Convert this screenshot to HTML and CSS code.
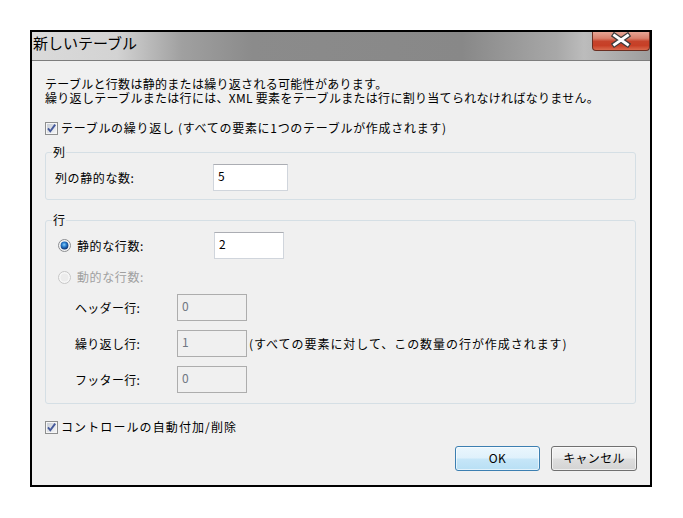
FILE: index.html
```html
<!DOCTYPE html>
<html lang="ja">
<head>
<meta charset="utf-8">
<title>新しいテーブル</title>
<link rel="stylesheet" href="styles.css">
</head>
<body>
<div class="page">
  <div class="dialog">
    <div class="titlebar">
      <span class="title">新しいテーブル</span>
      <button class="close" type="button" aria-label="閉じる">
        <svg width="56" height="18" viewBox="0 0 56 18">
          <path d="M21.5 3.5 L34.5 12.5 M34.5 3.5 L21.5 12.5" stroke="#3b3b3b" stroke-width="5.2" fill="none" stroke-linecap="square"/>
          <path d="M21.5 3.5 L34.5 12.5 M34.5 3.5 L21.5 12.5" stroke="#ffffff" stroke-width="2.8" fill="none" stroke-linecap="square"/>
        </svg>
      </button>
    </div>
    <div class="client">
      <p class="intro">テーブルと行数は静的または繰り返される可能性があります。<br>繰り返しテーブルまたは行には、XML 要素をテーブルまたは行に割り当てられなければなりません。</p>

      <label class="check top">
        <svg class="box" width="13" height="13" viewBox="0 0 13 13">
          <defs><linearGradient id="cb1" x1="0" y1="0" x2="1" y2="1"><stop offset="0" stop-color="#c9ced6"/><stop offset="1" stop-color="#f4f5f7"/></linearGradient></defs>
          <rect x="0.5" y="0.5" width="12" height="12" fill="#f6f6f6" stroke="#8e8f8f"/>
          <rect x="2" y="2" width="9" height="9" fill="url(#cb1)"/>
          <path d="M3 6.4 L5.3 9.3 L10.2 2.6" fill="none" stroke="#45599b" stroke-width="1.9"/>
        </svg>
        <span>テーブルの繰り返し (すべての要素に1つのテーブルが作成されます)</span>
      </label>

      <fieldset class="group g1">
        <legend>列</legend>
        <div class="row col-row">
          <span class="lbl col-lbl">列の静的な数:</span>
          <input class="field w75" type="text" value="5">
        </div>
      </fieldset>

      <fieldset class="group g2">
        <legend>行</legend>
        <div class="row radio-row">
          <svg class="radio" width="13" height="13" viewBox="0 0 13 13">
            <defs><radialGradient id="rd1" cx="0.45" cy="0.4" r="0.6"><stop offset="0" stop-color="#8fd0f8"/><stop offset="0.45" stop-color="#2a7fd0"/><stop offset="1" stop-color="#0c2f6e"/></radialGradient></defs>
            <circle cx="6.5" cy="6.5" r="6" fill="#f5f5f5" stroke="#8b8d90"/>
            <circle cx="6.5" cy="6.5" r="3.9" fill="url(#rd1)"/>
          </svg>
          <span class="lbl radio-lbl">静的な行数:</span>
          <input class="field w70" type="text" value="2">
        </div>
        <div class="row radio-row dyn">
          <svg class="radio" width="13" height="13" viewBox="0 0 13 13">
            <circle cx="6.5" cy="6.5" r="6" fill="#f7f7f7" stroke="#c6c6c6"/>
            <circle cx="6.5" cy="6.5" r="4" fill="#ececec"/>
          </svg>
          <span class="lbl disabled">動的な行数:</span>
        </div>
        <div class="row sub first">
          <span class="lbl sub-lbl">ヘッダー行:</span>
          <input class="field w70" type="text" value="0" disabled>
        </div>
        <div class="row sub">
          <span class="lbl sub-lbl">繰り返し行:</span>
          <input class="field w70" type="text" value="1" disabled>
          <span class="note">(すべての要素に対して、この数量の行が作成されます)</span>
        </div>
        <div class="row sub">
          <span class="lbl sub-lbl">フッター行:</span>
          <input class="field w70" type="text" value="0" disabled>
        </div>
      </fieldset>

      <label class="check bottom">
        <svg class="box" width="13" height="13" viewBox="0 0 13 13">
          <defs><linearGradient id="cb2" x1="0" y1="0" x2="1" y2="1"><stop offset="0" stop-color="#c9ced6"/><stop offset="1" stop-color="#f4f5f7"/></linearGradient></defs>
          <rect x="0.5" y="0.5" width="12" height="12" fill="#f6f6f6" stroke="#8e8f8f"/>
          <rect x="2" y="2" width="9" height="9" fill="url(#cb2)"/>
          <path d="M3 6.4 L5.3 9.3 L10.2 2.6" fill="none" stroke="#45599b" stroke-width="1.9"/>
        </svg>
        <span>コントロールの自動付加/削除</span>
      </label>

      <div class="buttons">
        <button class="btn ok" type="button">OK</button>
        <button class="btn cancel" type="button">キャンセル</button>
      </div>
    </div>
  </div>
</div>
</body>
</html>
```

FILE: styles.css
```css
* { box-sizing: border-box; }

body {
  margin: 0;
  background: #ffffff;
  font-family: "Noto Sans CJK JP", "Noto Sans", sans-serif;
  font-size: 12px;
  color: #000;
}

.page {
  padding: 30px 0 0 30px;
}

.dialog {
  width: 622px;
  height: 457px;
  border: 2px solid #000;
  background: #f0f0f0;
  display: flex;
  flex-direction: column;
}

.titlebar {
  flex: none;
  height: 29px;
  display: flex;
  align-items: flex-start;
  border-bottom: 1px solid #7d7d7d;
  background: linear-gradient(to right, #dadada 0px, #d3d3d3 85px, #a0a0a0 150px, #8b8b8b 220px, #888888 430px, #a8a8a8 525px, #bcbcbc 552px, #9d9d9d 618px);
}

.title {
  font-size: 15px;
  line-height: 18px;
  padding: 2px 0 0 1px;
}

.close {
  margin-left: auto;
  width: 58px;
  height: 19px;
  padding: 0;
  border: 1px solid #6a2d20;
  border-top: 0;
  border-radius: 0 0 4px 4px;
  background: linear-gradient(#e6a595 0%, #d9806c 35%, #c6432b 52%, #c73f26 75%, #d9694c 100%);
  display: block;
}

.close svg { display: block; }

.client {
  flex: 1;
  padding: 16px 14px 0 13px;
}

.intro {
  margin: 0;
  line-height: 14px;
  letter-spacing: 0.3px;
}

.check {
  display: flex;
  align-items: center;
  gap: 3px;
  height: 14px;
  margin-top: 16px;
  line-height: 14px;
  letter-spacing: 0.3px;
}

.check.top span { letter-spacing: 0.7px; }

.box, .radio { display: block; flex: none; }

.group {
  margin: 10px 0 0;
  padding: 5px 0 8px;
  border: 1px solid #d5dfe5;
  border-radius: 3px;
  min-inline-size: 0;
}

.group legend {
  margin-left: 6px;
  padding: 0 1px;
  line-height: 14px;
}

.g2 {
  margin-top: 13px;
  padding-bottom: 10px;
}

.row {
  display: flex;
  align-items: center;
}

.lbl {
  flex: none;
  line-height: 14px;
  letter-spacing: 0.3px;
}

.col-row { padding-left: 9px; }
.col-lbl { width: 158px; letter-spacing: 0.6px; }

.radio-row {
  padding-left: 12px;
  gap: 6px;
}
.radio-lbl { width: 131px; letter-spacing: 0.6px; }

.dyn {
  margin-top: 11px;
  height: 14px;
}
.disabled { color: #a0a0a0; letter-spacing: 0.6px; }

.sub {
  padding-left: 29px;
  margin-top: 9px;
}
.sub.first { margin-top: 10px; }
.sub-lbl { width: 102px; }

.field {
  height: 27px;
  margin: 0;
  padding: 0 4px 4px;
  border: 1px solid #d0d5dc;
  border-top-color: #abadb3;
  background: #fff;
  font-family: inherit;
  font-size: 12px;
  color: #000;
  outline: none;
}

.field:disabled {
  background: #f0f0f0;
  border-color: #adadad;
  color: #6f7782;
}

.w75 { width: 75px; }
.w70 { width: 70px; }

.note {
  margin-left: 2px;
  line-height: 14px;
  letter-spacing: 0.95px;
}

.bottom { margin-top: 16px; }
.check.bottom span { letter-spacing: 1.1px; }

.buttons {
  display: flex;
  justify-content: flex-end;
  gap: 11px;
  margin-top: 12px;
  margin-right: -1px;
}

.btn {
  height: 25px;
  padding: 0 0 2px;
  border-radius: 3px;
  font-family: inherit;
  font-size: 12px;
  color: #000;
  letter-spacing: 0.3px;
}

.ok {
  width: 85px;
  border: 1px solid #3c7fb1;
  background: linear-gradient(#eaf6fd 0%, #dff1fb 48%, #c6e6f8 52%, #b8dff4 100%);
  box-shadow: inset 0 0 0 1px rgba(255, 255, 255, 0.6);
}

.cancel {
  width: 86px;
  border: 1px solid #707070;
  background: linear-gradient(#f3f3f3 0%, #ebebeb 48%, #dedede 52%, #d3d3d3 100%);
  box-shadow: inset 0 0 0 1px rgba(255, 255, 255, 0.6);
}
```
